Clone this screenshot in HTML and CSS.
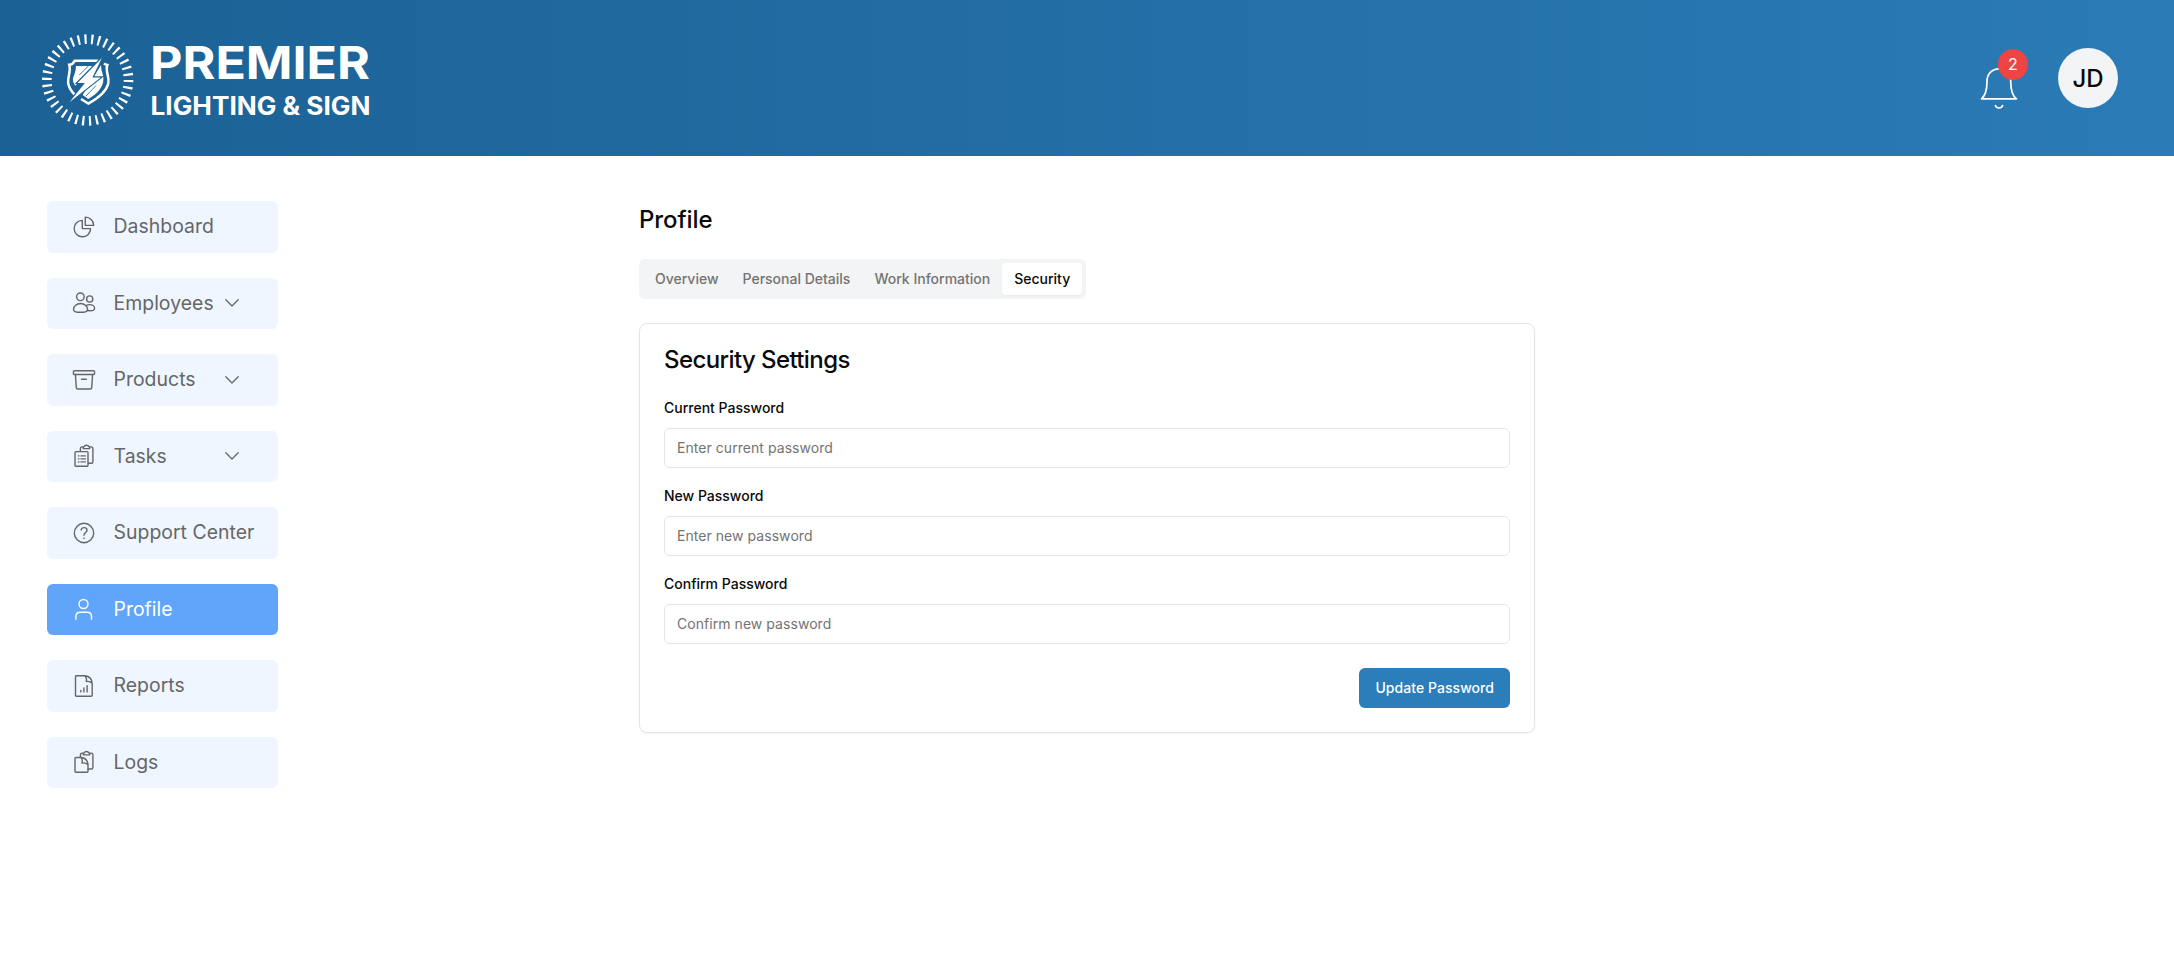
FILE: index.html
```html
<!DOCTYPE html>
<html lang="en">
<head>
<meta charset="utf-8">
<title>Profile</title>
<link rel="stylesheet" href="styles.css">
</head>
<body>
<header class="header">
  <div class="brand">
    <svg class="brand-mark" viewBox="0 0 345 345" fill="none">
      <circle cx="173" cy="165" r="122.5" stroke="#fff" stroke-width="29" stroke-dasharray="6.5 13.755" stroke-dashoffset="0.5"/>
      <path d="M205 107.500H134Q128 119 118 119C124 140 112 154 114.500 175C117 188 125 200 134 209M222 115Q226 119 232 120C225 140 239 154 235 175C229 202 204 220 175 236L153 222" stroke="#fff" stroke-width="7.500"/>
      <path d="M138 123H192L136 182C126 168 128 158 133 149Q138 137 138 123Z" fill="#fff"/>
      <path d="M213 120Q213 137 219 150C226 184 203 205 175 222L158 210Z" fill="#fff"/>
      <path d="M222 90 138 175.500H161L108 242 217 155.500H190Z" fill="#fff" stroke="#1d6498" stroke-width="3.500"/>
      <path d="M148 150 176 122M168 213 198 182" stroke="#1d6498" stroke-width="2.500"/>
    </svg>
    <svg class="brand-name" viewBox="0 0 222 90" fill="#fff">
      <text class="brand-top" x="0" y="44" textLength="220" lengthAdjust="spacingAndGlyphs">PREMIER</text>
      <text class="brand-sub" x="0.500" y="80" textLength="220" lengthAdjust="spacingAndGlyphs">LIGHTING &amp; SIGN</text>
    </svg>
  </div>
  <div class="account">
    <div class="bell">
      <svg class="bell-icon" viewBox="0 0 38 44" fill="none" stroke="#fff" stroke-width="1.7" stroke-linejoin="round" stroke-linecap="round">
        <path d="M1.5 31.8C5.5 28.5 7 23 7 14.5C7 6.5 12.5 1.8 18.8 1.8S30.7 6.5 30.7 14.5C30.7 23 32.2 28.5 36.5 31.8Z"/>
        <path d="M15.4 38.5C16.5 41.8 21.5 41.8 22.6 38.5"/>
      </svg>
      <span class="badge">2</span>
    </div>
    <div class="avatar">JD</div>
  </div>
</header>

<div class="layout">
  <nav class="sidebar">
    <a class="nav-item">
      <svg class="icon" viewBox="0 0 24 24"><path d="M10.3 5.4A8.2 8.2 0 1 0 18.6 13.6H10.3Z"/><path d="M13.3 2.1A8.3 8.3 0 0 1 21.7 10.4H13.3Z"/></svg>
      <span>Dashboard</span>
    </a>
    <a class="nav-item">
      <svg class="icon" viewBox="0 0 24 24"><circle cx="8.4" cy="5.8" r="3.8"/><circle cx="17.7" cy="8" r="3.1"/><path d="M1.5 18.4C1.5 15.2 4.7 12.5 8.5 12.5S15.6 15.2 15.6 18.4C15.6 20.2 12.6 21.3 8.5 21.3S1.5 20.2 1.5 18.4Z"/><path d="M14.2 14.6C15.3 13.8 16.5 13.6 17.8 13.6C20.6 13.6 22.6 15.5 22.6 17.6C22.6 19 20.3 19.8 17.8 19.8L15.2 19.5"/></svg>
      <span>Employees</span>
      <svg class="chevron" viewBox="0 0 14 8"><path d="M.8.8 7 7 13.2.8"/></svg>
    </a>
    <a class="nav-item">
      <svg class="icon" viewBox="0 0 24 24"><rect x="1.4" y="2.8" width="21.2" height="3.7" rx="1"/><path d="M3.4 6.5 4.3 19.6Q4.4 21 5.7 21H18.3Q19.6 21 19.7 19.6L20.6 6.5M9.5 11.2H14.3"/></svg>
      <span>Products</span>
      <svg class="chevron" viewBox="0 0 14 8"><path d="M.8.8 7 7 13.2.8"/></svg>
    </a>
    <a class="nav-item">
      <svg class="icon" viewBox="0 0 24 24"><rect x="3" y="7.6" width="13" height="14.6" rx="1"/><path d="M8.4 7.4V4.5Q8.4 2.900 10 2.900H11.200M17.800 2.900H19.300Q20.900 2.900 20.900 4.500V17.700Q20.900 19.200 19.300 19.200H16.200M11.300 4.600V3.200Q11.300 2.600 12.300 2.500C12.700.8 16.300.8 16.700 2.500Q17.700 2.600 17.700 3.200V4.600Z"/><path d="M6.300 11.900H7M9 11.900H13.300M6.300 14.900H7M9 14.900H13.300M6.300 17.900H7M9 17.900H13.300"/></svg>
      <span>Tasks</span>
      <svg class="chevron" viewBox="0 0 14 8"><path d="M.8.8 7 7 13.2.8"/></svg>
    </a>
    <a class="nav-item">
      <svg class="icon" viewBox="0 0 24 24"><circle cx="12" cy="12" r="9.7"/><path d="M9.2 9C9.2 5.8 15 5.9 15 9.2C15 11.5 12 11.7 12 14.3M12 17V17.4"/></svg>
      <span>Support Center</span>
    </a>
    <a class="nav-item active">
      <svg class="icon" viewBox="0 0 24 24"><circle cx="11.5" cy="7" r="4.5"/><path d="M3.9 22.2V19.5Q3.9 15.2 8.2 15.2H15.2Q19.5 15.2 19.5 19.5V22.2"/></svg>
      <span>Profile</span>
    </a>
    <a class="nav-item">
      <svg class="icon" viewBox="0 0 24 24"><path d="M4.5 1.7H12.900Q19.800 2.500 20.200 9.500V21.200Q20.200 22.200 19.200 22.200H4.500Q3.500 22.200 3.500 21.200V2.700Q3.500 1.700 4.500 1.700ZM12.900 1.700Q15 4 14.300 7.500Q18.500 7 20.200 9.500"/><path d="M8.800 16.500V17.900M11.900 14V17.900M15.100 11.600V17.900"/></svg>
      <span>Reports</span>
    </a>
    <a class="nav-item">
      <svg class="icon" viewBox="0 0 24 24"><path d="M4 7.5H9.5Q15.5 8.5 16 14.5V21.2Q16 22.2 15 22.2H4Q3 22.2 3 21.2V8.500Q3 7.500 4 7.500ZM9.200 7.500Q10.800 9.500 10 13Q14.500 12.500 16 15"/><path d="M8.400 7.200V4.700Q8.400 3.100 10 3.100H11.200M17.800 3.100H19.300Q20.900 3.100 20.900 4.700V17.400Q20.900 19 19.300 19H16.200M11.300 4.900V3.500Q11.300 2.900 12.300 2.800C12.700 1 16.300 1 16.700 2.800Q17.700 2.900 17.700 3.500V4.900Z"/></svg>
      <span>Logs</span>
    </a>
  </nav>

  <main class="content">
    <h1 class="title">Profile</h1>
    <div class="tabs">
      <button class="tab">Overview</button>
      <button class="tab">Personal Details</button>
      <button class="tab">Work Information</button>
      <button class="tab selected">Security</button>
    </div>
    <section class="card">
      <h2 class="card-title">Security Settings</h2>
      <form class="form">
        <label class="field">Current Password<input class="input" type="password" placeholder="Enter current password"></label>
        <label class="field">New Password<input class="input" type="password" placeholder="Enter new password"></label>
        <label class="field">Confirm Password<input class="input" type="password" placeholder="Confirm new password"></label>
      </form>
      <div class="actions"><button class="submit">Update Password</button></div>
    </section>
  </main>
</div>
</body>
</html>
```

FILE: styles.css
```css
* { box-sizing: border-box; }
body {
  margin: 0;
  min-height: 979px;
  background: #fff;
  color: #0a0a0a;
  font-family: Inter, "Liberation Sans", sans-serif;
}
button, input { font: inherit; }
.header {
  height: 156px;
  padding: 0 56px 0 30px;
  display: flex;
  justify-content: space-between;
  background: linear-gradient(to right, #1b6195, #2b7bb6);
}
.brand { display: flex; align-items: flex-start; }
.brand-mark { width: 115px; height: 115px; margin-top: 25px; }
.brand-name { width: 222px; height: 90px; margin: 35px 0 0 4.5px; overflow: visible; }
.brand-top { font-size: 45px; font-weight: 700; }
.brand-sub { font-size: 25px; font-weight: 700; }
.account { display: flex; align-items: center; gap: 40px; }
.bell { position: relative; width: 38px; height: 44px; margin-top: 21px; }
.bell-icon { display: block; width: 38px; height: 44px; }
.badge {
  position: absolute;
  left: 18px;
  top: -18px;
  width: 30px;
  height: 31px;
  border-radius: 50%;
  background: #ef4444;
  color: #fff;
  font-size: 16px;
  line-height: 31px;
  text-align: center;
}
.avatar {
  width: 60px;
  height: 60px;
  border-radius: 50%;
  background: #f3f4f6;
  display: flex;
  align-items: center;
  justify-content: center;
  font-size: 24px;
  font-weight: 500;
}
.layout {
  display: grid;
  grid-template-columns: 1fr 896px 1fr;
  padding: 45px 0 0;
}
.sidebar { display: flex; flex-direction: column; gap: 25px; padding-left: 47px; }
.nav-item {
  width: 230.5px;
  height: 51.5px;
  padding-left: 25px;
  border-radius: 6px;
  display: flex;
  align-items: center;
  background: #eff6ff;
  color: #666;
  font-size: 19.4px;
  letter-spacing: .04px;
}
.nav-item span { margin: -1px 0 0 17.5px; white-space: nowrap; flex: 0 0 100px; }
.nav-item.active { background: #60a5fa; color: #fff; }
.icon, .chevron { fill: none; stroke: currentColor; stroke-linecap: round; stroke-linejoin: round; flex: none; }
.icon { width: 24px; height: 24px; stroke-width: 1.4; }
.chevron { width: 14px; height: 8px; margin-left: 11px; stroke-width: 1.3; }
.title { margin: 3px 0 23px; font-size: 24px; line-height: 32px; font-weight: 500; letter-spacing: -.1px; }
.tabs {
  display: inline-flex;
  height: 40px;
  padding: 4px;
  border-radius: 6px;
  background: #f3f4f6;
}
.tab {
  height: 32px;
  padding: 0 12px 2px;
  border: 0;
  border-radius: 4px;
  background: none;
  color: #737373;
  font-size: 14px;
  font-weight: 500;
}
.tab.selected { background: #fff; color: #0a0a0a; box-shadow: 0 1px 2px rgba(0, 0, 0, .05); }
.content { display: flex; flex-direction: column; align-items: flex-start; }
.card {
  width: 100%;
  margin-top: 24px;
  padding: 24px;
  border: 1px solid #e5e5e5;
  border-radius: 8px;
  box-shadow: 0 1px 2px rgba(0, 0, 0, .05);
}
.card-title { margin: 0 0 24px; font-size: 24px; line-height: 24px; font-weight: 500; letter-spacing: -.6px; }
.form { display: grid; gap: 16px; }
.field { display: grid; gap: 8px; font-size: 14px; line-height: 24px; font-weight: 500; }
.input {
  width: 100%;
  height: 40px;
  padding: 0 12px 1px;
  border: 1px solid #e5e5e5;
  border-radius: 6px;
  background: #fff;
  font-size: 14px;
  font-weight: 400;
  letter-spacing: .05px;
}
.input::placeholder { color: #737373; opacity: 1; }
.actions { display: flex; justify-content: flex-end; margin-top: 24px; }
.submit {
  height: 40px;
  padding: 0 16px 2px;
  border: 0;
  border-radius: 6px;
  background: #2b7eb9;
  color: #fff;
  font-size: 14px;
  font-weight: 500;
  letter-spacing: .05px;
}
```
